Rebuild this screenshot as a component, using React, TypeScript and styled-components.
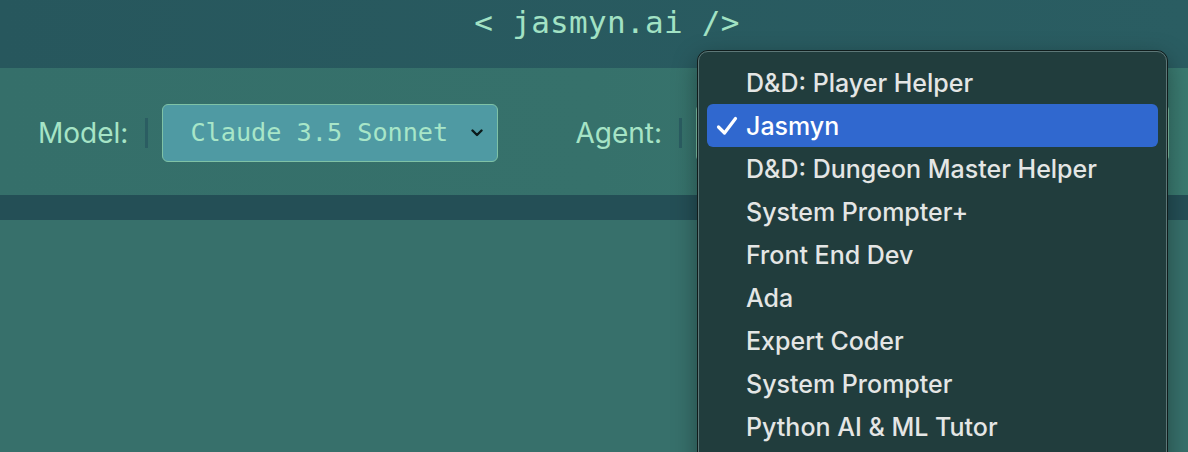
import React from "react";
import styled, { createGlobalStyle } from "styled-components";

const GlobalStyle = createGlobalStyle`
  html, body {
    margin: 0;
    padding: 0;
    background: #37706b;
    overflow: hidden;
  }
  #root {
    min-height: 452px;
  }
`;

const Page = styled.div`
  position: relative;
  width: 1188px;
  height: 452px;
  background: #37706b;
  overflow: hidden;
`;

const Header = styled.header`
  height: 68px;
  display: flex;
  align-items: center;
  justify-content: center;
  padding-left: 26px;
  box-sizing: border-box;
  background: linear-gradient(90deg, #27575d 0%, #2a5d62 100%);
`;

const Title = styled.h1`
  margin: 0;
  margin-top: -24px;
  font-family: "DejaVu Sans Mono", "Liberation Mono", monospace;
  font-size: 31px;
  font-weight: 400;
  color: #a2e2c4;
  letter-spacing: 0.3px;
`;

const Toolbar = styled.div`
  height: 127px;
  display: flex;
  align-items: center;
  padding-left: 38px;
  padding-top: 2px;
  box-sizing: border-box;
  background: linear-gradient(90deg, #356f6a 0%, #36716b 50%, #3a7a70 100%);
`;

const Field = styled.div<{ $gap?: number }>`
  display: flex;
  align-items: center;
  margin-right: ${(p) => p.$gap ?? 0}px;
`;

const Label = styled.span`
  font-family: Inter, "Noto Sans", sans-serif;
  font-size: 28px;
  color: #a6e4c6;
  margin-right: 17px;
`;

const Divider = styled.span`
  width: 3px;
  height: 30px;
  background: #2b5d62;
  margin-right: 14px;
`;

const Select = styled.div<{ $width: number }>`
  width: ${(p) => p.$width}px;
  height: 58px;
  box-sizing: border-box;
  display: flex;
  align-items: center;
  justify-content: space-between;
  padding: 0 14px 0 27px;
  background: #4f9aa3;
  border: 1px solid #7fc2a6;
  border-radius: 6px;
  font-family: "DejaVu Sans Mono", "Liberation Mono", monospace;
  font-size: 25.2px;
  color: #a8e6c8;
`;

const Band = styled.div`
  height: 25px;
  background: #244f56;
`;

const Menu = styled.div`
  position: absolute;
  left: 697px;
  top: 50px;
  width: 471px;
  height: 440px;
  box-sizing: border-box;
  padding: 10px 9px;
  background: #213d3d;
  border: 1px solid #101c1c;
  outline: 1px solid #5d7777;
  outline-offset: -2px;
  border-radius: 11px;
  box-shadow: 0 8px 24px rgba(0, 0, 0, 0.35);
`;

const Item = styled.div<{ $active?: boolean }>`
  height: 43px;
  display: flex;
  align-items: center;
  padding-left: 9px;
  border-radius: 6px;
  background: ${(p) => (p.$active ? "#3068cf" : "transparent")};
  color: ${(p) => (p.$active ? "#ffffff" : "#e4e6e5")};
  font-family: Inter, "Noto Sans", sans-serif;
  font-size: 25px;
  font-weight: 500;
`;

const Check = styled.span`
  width: 30px;
  display: flex;
  align-items: center;
`;

const agents = [
  "D&D: Player Helper",
  "Jasmyn",
  "D&D: Dungeon Master Helper",
  "System Prompter+",
  "Front End Dev",
  "Ada",
  "Expert Coder",
  "System Prompter",
  "Python AI & ML Tutor",
];

const Chevron = () => (
  <svg width="12" height="8" viewBox="0 0 12 8">
    <path d="M1.5 1.5 L6 6 L10.5 1.5" fill="none" stroke="#0b1a1a" strokeWidth="2.4" strokeLinecap="round" strokeLinejoin="round" />
  </svg>
);

const CheckMark = () => (
  <svg width="22" height="20" viewBox="0 0 22 20">
    <path d="M2.5 11 L8.5 17 L19.5 2.5" fill="none" stroke="#ffffff" strokeWidth="3.2" strokeLinecap="round" strokeLinejoin="round" />
  </svg>
);

const App: React.FC = () => (
  <Page>
    <GlobalStyle />
    <Header>
      <Title>{"< jasmyn.ai />"}</Title>
    </Header>
    <Toolbar>
      <Field $gap={77}>
        <Label>{"Model:"}</Label>
        <Divider />
        <Select $width={336}>
          <span>{"Claude 3.5 Sonnet"}</span>
          <Chevron />
        </Select>
      </Field>
      <Field>
        <Label>{"Agent:"}</Label>
        <Divider />
        <Select $width={473} />
      </Field>
    </Toolbar>
    <Band />
    <Menu>
      {agents.map((name) => (
        <Item $active={name === "Jasmyn"} key={name}>
          <Check>{name === "Jasmyn" ? <CheckMark /> : null}</Check>
          {name}
        </Item>
      ))}
    </Menu>
  </Page>
);

export default App;
